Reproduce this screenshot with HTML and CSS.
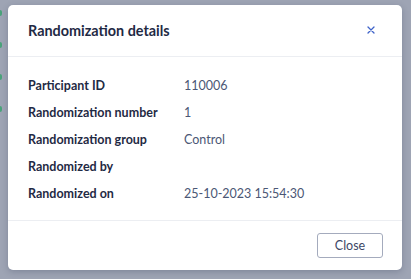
FILE: index.html
```html
<!DOCTYPE html>
<html lang="en">
<head>
    <meta charset="UTF-8">
    <meta name="viewport" content="width=device-width, initial-scale=1.0">
    <title>Randomization details</title>
    <link rel="stylesheet" href="styles.css">
</head>
<body>
    <div class="backdrop">
        <div class="page-edge">
            <span class="dot"></span>
            <span class="dot"></span>
            <span class="dot"></span>
            <span class="dot"></span>
        </div>

        <div class="modal">
            <div class="modal-header">
                <h2>Randomization details</h2>
                <button class="close-x" aria-label="Close">
                    <svg width="8" height="8" viewBox="0 0 8 8">
                        <path d="M1 1 L7 7 M7 1 L1 7" stroke="#3f63c9" stroke-width="1.3" stroke-linecap="round"/>
                    </svg>
                </button>
            </div>

            <div class="modal-body">
                <dl class="details">
                    <dt>Participant ID</dt>
                    <dd>110006</dd>
                    <dt>Randomization number</dt>
                    <dd>1</dd>
                    <dt>Randomization group</dt>
                    <dd>Control</dd>
                    <dt>Randomized by</dt>
                    <dd></dd>
                    <dt>Randomized on</dt>
                    <dd>25-10-2023 15:54:30</dd>
                </dl>
            </div>

            <div class="modal-footer">
                <button class="button">Close</button>
            </div>
        </div>
    </div>
</body>
</html>
```

FILE: styles.css
```css
html, body {
    margin: 0;
    padding: 0;
}
body {
    font-family: Lato, "Open Sans", Arial, sans-serif;
    background-color: #9ea4b4;
    width: 411px;
    height: 279px;
    overflow: hidden;
}
.backdrop {
    display: flex;
    height: 279px;
}
.page-edge {
    width: 8px;
    display: flex;
    flex-direction: column;
    gap: 26px;
    padding-top: 10px;
}
.dot {
    display: block;
    width: 2px;
    height: 6px;
    background-color: #4aa37a;
    border-radius: 0 2px 2px 0;
}
.modal {
    margin-top: 5px;
    width: 394px;
    height: 265px;
    background: white;
    border-radius: 5px;
    box-shadow: 0 2px 6px rgba(40, 50, 80, 0.25);
    display: flex;
    flex-direction: column;
}
.modal-header {
    height: 52px;
    border-bottom: 1px solid #eceef2;
    display: flex;
    align-items: center;
    justify-content: space-between;
    padding: 0 27px 0 20px;
}
.modal-header h2 {
    margin: 0;
    font-size: 14.4px;
    font-weight: 700;
    color: #1f2a44;
}
.close-x {
    border: none;
    background: none;
    padding: 0;
    width: 8px;
    height: 8px;
    display: flex;
    cursor: pointer;
}
.modal-body {
    flex: 1;
    padding: 15px 20px 13px;
}
.details {
    margin: 0;
    display: grid;
    grid-template-columns: 156px 1fr;
    grid-auto-rows: 27px;
    align-items: center;
    font-size: 12.5px;
}
.details dt {
    font-weight: 700;
    color: #1f2a44;
}
.details dd {
    margin: 0;
    color: #4b5775;
}
.modal-footer {
    height: 50px;
    border-top: 1px solid #eceef2;
    display: flex;
    align-items: center;
    justify-content: flex-end;
    padding: 0 19px;
}
.button {
    width: 66px;
    height: 25px;
    font-family: inherit;
    font-size: 12.5px;
    color: #3d4766;
    background: white;
    border: 1px solid #a4abbd;
    border-radius: 3px;
    cursor: pointer;
}
```
